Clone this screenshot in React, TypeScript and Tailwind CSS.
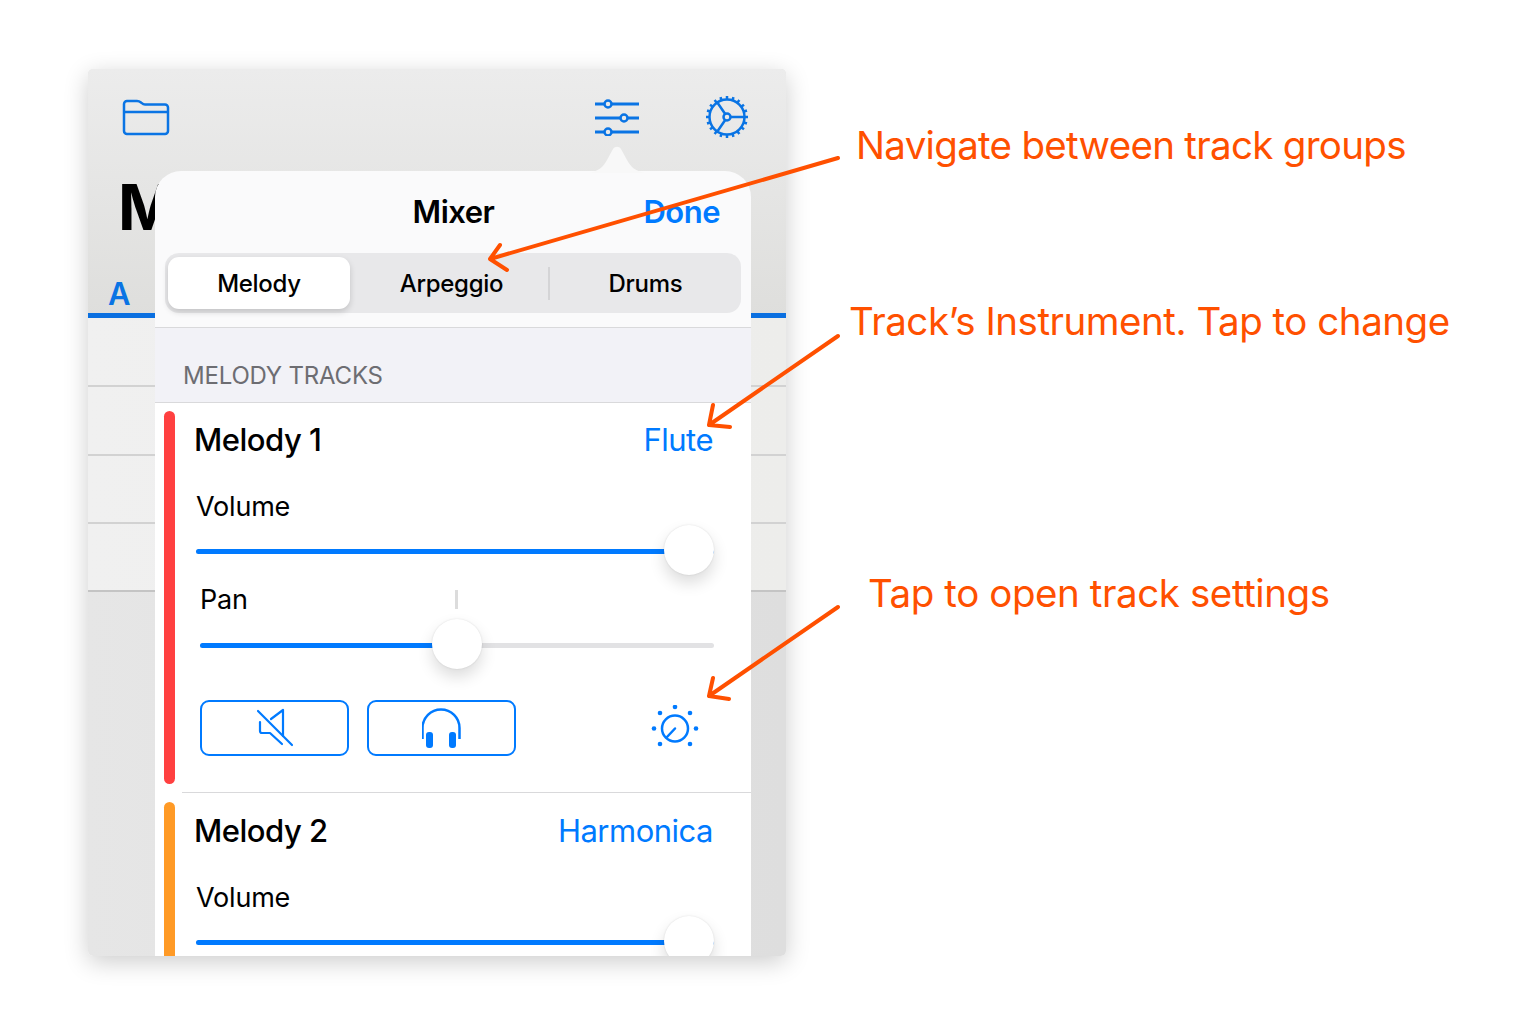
const blue = '#007aff';
const barBlue = '#0a74e4';

function FolderIcon() {
  return (
    <svg width="48" height="39" viewBox="0 0 48 39" fill="none" stroke={barBlue} strokeWidth="2.5">
      <path d="M2 7a3 3 0 0 1 3-3h10c2 0 3 .7 4 1.500s2 2 4 2H43a3 3 0 0 1 3 3V34a3 3 0 0 1-3 3H5a3 3 0 0 1-3-3Z" />
      <path d="M2 15h44" />
    </svg>
  );
}

function SlidersIcon() {
  return (
    <svg width="48" height="39" viewBox="0 0 48 39" fill="none" stroke={barBlue} strokeWidth="3">
      <path d="M2 7h9M19 7h27M2 21h25M35 21h11M2 35h9M19 35h27" />
      <circle cx="15" cy="7" r="3.500" strokeWidth="2.500" />
      <circle cx="31" cy="21" r="3.500" strokeWidth="2.500" />
      <circle cx="15" cy="35" r="3.500" strokeWidth="2.500" />
    </svg>
  );
}

function GearIcon() {
  const teeth = Array.from({ length: 20 }, (_, i) => i * 18);
  return (
    <svg width="44" height="44" viewBox="0 0 44 44" fill="none" stroke={barBlue}>
      <circle cx="22" cy="22" r="17.500" strokeWidth="2.500" />
      {teeth.map((a) => (
        <path key={a} d="M22 1v4" strokeWidth="2.500" transform={`rotate(${a} 22 22)`} />
      ))}
      <circle cx="22" cy="22" r="3.500" strokeWidth="2.500" />
      <path d="M25.500 22H39M20.200 19 12 7M20.200 25 12 37" strokeWidth="2.500" />
    </svg>
  );
}

function MuteIcon() {
  return (
    <svg width="38" height="40" viewBox="0 0 38 40" fill="none" stroke={blue} strokeWidth="2.2" strokeLinecap="round" strokeLinejoin="round">
      <path d="M2 3 36 37" />
      <path d="M15 11 27 2v26M4 14v9a2 2 0 0 0 2 2h8l12 11" />
    </svg>
  );
}

function HeadphonesIcon() {
  return (
    <svg width="40" height="42" viewBox="1 0 40 42" fill="none">
      <path d="M1.500 32V21a18.500 18.500 0 0 1 37 0v11" stroke={blue} strokeWidth="2.500" />
      <rect x="5" y="25" width="7" height="16" rx="3" fill={blue} />
      <rect x="28" y="25" width="7" height="16" rx="3" fill={blue} />
    </svg>
  );
}

function KnobIcon() {
  const dots = [[24, 2], [9, 8], [39, 8], [3, 23.5], [45, 23.5], [9, 39], [39, 39]];
  return (
    <svg width="48" height="46" viewBox="0 0 48 46" fill="none" stroke={blue}>
      <circle cx="24" cy="23.500" r="13" strokeWidth="2.500" />
      <path d="M16 32 24 23.500" strokeWidth="2.500" strokeLinecap="round" />
      {dots.map(([x, y]) => (
        <circle key={`${x}-${y}`} cx={x} cy={y} r="2.300" fill={blue} stroke="none" />
      ))}
    </svg>
  );
}

function Slider({ percent, left }: { percent: number; left: string }) {
  return (
    <div className={`relative h-[50px] ${left} mr-[37px]`}>
      <div className="absolute left-0 right-0 top-[24px] h-[5px] rounded-full bg-[#e2e2e4]" />
      <div className="absolute left-0 top-[24px] h-[5px] rounded-full bg-[#007aff]" style={{ width: `${percent}%` }} />
      <div
        className="absolute top-0 h-[50px] w-[50px] -translate-x-1/2 rounded-full bg-white shadow-[0_8px_16px_rgba(0,0,0,0.14),0_0_2px_rgba(0,0,0,0.12)]"
        style={{ left: `calc(25px + (100% - 50px) * ${percent / 100})` }}
      />
    </div>
  );
}

function TrackHeader({ name, instrument }: { name: string; instrument: string }) {
  return (
    <div className="flex items-center justify-between pl-[39px] pr-[38px] text-[31px] leading-[38px] tracking-[-0.5px]">
      <span className="font-medium text-black">{name}</span>
      <span className="text-[#007aff]">{instrument}</span>
    </div>
  );
}

function App() {
  return (
    <div className="relative h-[1012px] w-[1513px] overflow-hidden bg-white font-['Inter',sans-serif]">
      <div className="pl-[88px] pt-[69px]">
        {/* app behind the popover */}
        <div className="relative h-[887px] w-[698px] overflow-hidden rounded-[5px] bg-gradient-to-r from-[#e6e6e6] to-[#dedede] shadow-[0_6px_24px_rgba(0,0,0,0.2)]">
          <div className="h-[249px] bg-gradient-to-b from-[#ececec] to-[#dededc]">
            <div className="flex h-[98px] items-start justify-between pl-[34px] pr-[37px] pt-[28px]">
              <FolderIcon />
              <div className="flex gap-[64px]">
                <SlidersIcon />
                <div className="-mt-[2px]">
                  <GearIcon />
                </div>
              </div>
            </div>
            <div className="pl-[30px] text-[63px] font-bold leading-[80px] text-black">M</div>
            <div className="pl-[20px] pt-[30px] text-[31px] font-semibold leading-[34px] text-[#0a74e4]">A</div>
            <div className="mt-[2px] h-[5px] bg-[#0a6fe0]" />
          </div>
          <div className="bg-gradient-to-r from-[#f0f0f0] to-[#ededeb]">
            <div className="h-[69px] border-b-2 border-[#d2d2d2]" />
            <div className="h-[69px] border-b-2 border-[#d2d2d2]" />
            <div className="h-[68px] border-b-2 border-[#d2d2d2]" />
            <div className="h-[68px] border-b-2 border-[#c4c4c4]" />
          </div>

          {/* popover */}
          <div className="absolute left-[67px] top-[102px] h-[800px] w-[596px] overflow-hidden rounded-t-[26px] bg-[#fafafb]">
            <div className="relative flex h-[82px] items-center justify-center text-[31px] font-semibold tracking-[-0.5px] text-black">
              <span className="ml-[1px]">Mixer</span>
              <span className="absolute right-[31px] text-[#007aff]">Done</span>
            </div>
            <div className="mx-[10px] flex h-[60px] items-center rounded-[14px] bg-[#e8e8ea] px-[3px] text-[24px] font-medium leading-none tracking-[-0.3px] text-black">
              <div className="flex h-[52px] w-[182px] items-center justify-center rounded-[11px] bg-white pt-[1px] shadow-[0_3px_6px_rgba(0,0,0,0.16)]">Melody</div>
              <div className="flex h-[33px] w-[200px] items-center justify-center border-r-2 border-[#d4d4d6] pl-[5px] pt-[1px]">Arpeggio</div>
              <div className="flex flex-1 items-center justify-center pl-[3px] pt-[1px]">Drums</div>
            </div>
            <div className="mt-[14px] flex h-[76px] items-end border-y border-[#d9d9db] bg-[#f2f2f7] pb-[11px] pl-[28px] text-[24px] leading-[30px] tracking-[-0.2px] text-[#6d6d72]">
              MELODY TRACKS
            </div>
            <div className="bg-white">
              <div className="relative h-[389px] pt-[18px]">
                <div className="absolute left-[9px] top-[8px] h-[373px] w-[11px] rounded-full bg-[#ff4040]" />
                <TrackHeader name="Melody 1" instrument="Flute" />
                <div className="pl-[41px] pt-[31px] text-[27px] leading-[34px] tracking-[-0.2px] text-black">Volume</div>
                <div className="pt-[1px]">
                  <Slider percent={100} left="ml-[41px]" />
                </div>
                <div className="relative flex pl-[45px] pt-[8px] text-[27px] leading-[34px] tracking-[-0.2px] text-black">
                  Pan
                  <div className="absolute left-[300px] top-[15px] h-[19px] w-[3px] bg-[#dcdcdc]" />
                </div>
                <div className="pt-[2px]">
                  <Slider percent={50} left="ml-[45px]" />
                </div>
                <div className="flex items-center pl-[45px] pr-[52px] pt-[31px]">
                  <div className="flex h-[56px] w-[149px] items-center justify-center rounded-[9px] border-2 border-[#007aff]"><MuteIcon /></div>
                  <div className="ml-[18px] flex h-[56px] w-[149px] items-center justify-center rounded-[9px] border-2 border-[#007aff]"><HeadphonesIcon /></div>
                  <div className="ml-auto"><KnobIcon /></div>
                </div>
              </div>
              <div className="ml-[27px] h-px bg-[#d9d9db]" />
              <div className="relative pt-[19px]">
                <div className="absolute left-[9px] top-[9px] h-[372px] w-[11px] rounded-full bg-[#ff9a26]" />
                <TrackHeader name="Melody 2" instrument="Harmonica" />
                <div className="pl-[41px] pt-[31px] text-[27px] leading-[34px] tracking-[-0.2px] text-black">Volume</div>
                <div className="pt-[1px]">
                  <Slider percent={100} left="ml-[41px]" />
                </div>
              </div>
            </div>
          </div>
          {/* popover pointer */}
          <svg className="absolute left-[501px] top-[76px]" width="56" height="28" viewBox="0 0 56 28">
            <path d="M0 28C10 26 14 22 18 15L24 4C26 1 30 1 32 4L38 15C42 22 46 26 56 28Z" fill="#f8f8f8" />
          </svg>
        </div>
      </div>

      {/* annotations */}
      <svg className="absolute inset-0" width="1513" height="1012" fill="none" stroke="#ff5000" strokeWidth="4" strokeLinecap="round" strokeLinejoin="round">
        <path d="M838 158 490 259M500 245l-10 14 17 11" />
        <path d="M838 336 709 425M713 405l-4 20 21 2" />
        <path d="M838 607 709 696M713 678l-4 18 20 3" />
      </svg>
      <div className="absolute left-[856px] top-[121px] text-[38.500px] leading-[48px] tracking-[-0.7px] text-[#ff5000]">Navigate between track groups</div>
      <div className="absolute left-[849px] top-[297px] text-[38.500px] leading-[48px] tracking-[-0.47px] text-[#ff5000]">Track’s Instrument. Tap to change</div>
      <div className="absolute left-[868px] top-[569px] text-[38.500px] leading-[48px] tracking-[-0.42px] text-[#ff5000]">Tap to open track settings</div>
    </div>
  );
}

export default App;
